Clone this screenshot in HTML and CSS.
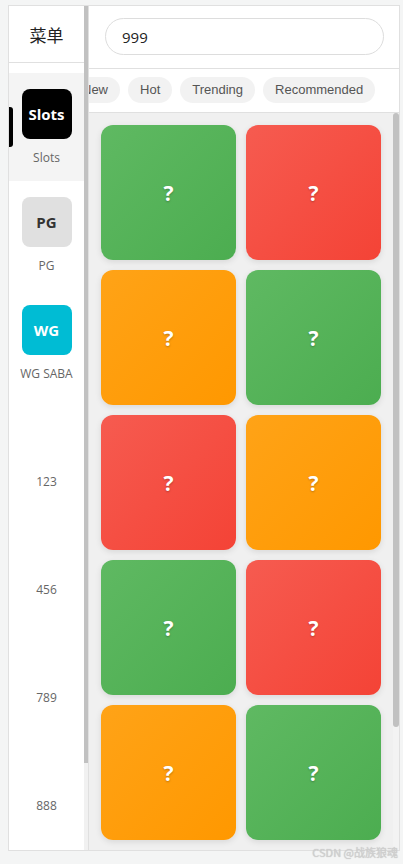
FILE: index.html
```html
<!DOCTYPE html>
<html>
<head>
  <meta charset="UTF-8">
  <title>菜单</title>
  <link rel="stylesheet" href="styles.css">
</head>
<body>
  <div class="app">
    <aside class="sidebar">
      <div class="side-scroll">
        <div class="side-head">菜单</div>
        <ul class="side-list">
          <li class="side-item active">
            <div class="side-icon icon-slots">Slots</div>
            <span class="side-label">Slots</span>
          </li>
          <li class="side-item">
            <div class="side-icon icon-pg">PG</div>
            <span class="side-label">PG</span>
          </li>
          <li class="side-item">
            <div class="side-icon icon-wg">WG</div>
            <span class="side-label">WG SABA</span>
          </li>
          <li class="side-item">
            <div class="side-icon"></div>
            <span class="side-label">123</span>
          </li>
          <li class="side-item">
            <div class="side-icon"></div>
            <span class="side-label">456</span>
          </li>
          <li class="side-item">
            <div class="side-icon"></div>
            <span class="side-label">789</span>
          </li>
          <li class="side-item">
            <div class="side-icon"></div>
            <span class="side-label">888</span>
          </li>
        </ul>
      </div>
      <div class="scroll-track side-track">
        <div class="scroll-thumb side-thumb"></div>
      </div>
    </aside>

    <main class="main">
      <div class="search-bar">
        <input type="text" class="search-input" value="999">
      </div>

      <div class="tabs">
        <div class="tab-row">
          <span class="tab">New</span>
          <span class="tab">Hot</span>
          <span class="tab">Trending</span>
          <span class="tab">Recommended</span>
        </div>
      </div>

      <div class="game-area">
        <div class="game-list">
          <div class="game-grid">
            <div class="game green">?</div>
            <div class="game red">?</div>
            <div class="game orange">?</div>
            <div class="game green">?</div>
            <div class="game red">?</div>
            <div class="game orange">?</div>
            <div class="game green">?</div>
            <div class="game red">?</div>
            <div class="game orange">?</div>
            <div class="game green">?</div>
          </div>
        </div>
        <div class="scroll-track list-track">
          <div class="scroll-thumb list-thumb"></div>
        </div>
      </div>
    </main>
  </div>

  <div class="watermark">CSDN @战族狼魂</div>
</body>
</html>
```

FILE: styles.css
```css
body {
  margin: 0;
  padding: 5px 0 0 8px;
  background: #f4f5f5;
  font-family: "Open Sans", "Noto Sans CJK SC", sans-serif;
  color: #333;
}

.app {
  width: 392px;
  height: 846px;
  box-sizing: border-box;
  border: 1px solid #e0e0e0;
  background: #fff;
  display: flex;
}

.scroll-track {
  flex-shrink: 0;
  background: #f1f1f1;
}

.scroll-thumb {
  background: #c1c1c1;
}

/* left menu */
.sidebar {
  width: 80px;
  flex-shrink: 0;
  box-sizing: border-box;
  border-right: 1px solid #e0e0e0;
  display: flex;
}

.side-scroll {
  flex: 1;
  min-width: 0;
  overflow: hidden;
}

.side-track {
  width: 4px;
}

.side-thumb {
  height: 757px;
}

.side-head {
  height: 56px;
  border-bottom: 1px solid #e0e0e0;
  display: flex;
  align-items: center;
  justify-content: center;
  font-family: "Noto Sans CJK SC", sans-serif;
  font-size: 17px;
  color: #222;
}

.side-list {
  list-style: none;
  margin: 0;
  padding: 10px 0 0;
}

.side-item {
  position: relative;
  height: 108px;
  box-sizing: border-box;
  padding-top: 16px;
  display: flex;
  flex-direction: column;
  align-items: center;
}

.side-item.active {
  background: #f4f4f4;
}

.side-item.active::before {
  content: "";
  position: absolute;
  left: 0;
  top: 34px;
  width: 4px;
  height: 40px;
  background: #000;
  border-radius: 0 3px 3px 0;
}

.side-icon {
  width: 50px;
  height: 50px;
  border-radius: 8px;
  display: flex;
  align-items: center;
  justify-content: center;
  font-weight: 700;
  font-size: 15px;
}

.icon-slots {
  background: #000;
  color: #fff;
}

.icon-pg {
  background: #e0e0e0;
  color: #333;
}

.icon-wg {
  background: #00bcd4;
  color: #fff;
}

.side-label {
  margin-top: 10px;
  font-size: 12px;
  line-height: 17px;
  color: #666;
}

/* right side */
.main {
  flex: 1;
  min-width: 0;
  display: flex;
  flex-direction: column;
}

.search-bar {
  height: 63px;
  box-sizing: border-box;
  padding: 12px 15px 0 16px;
  border-bottom: 1px solid #e0e0e0;
}

.search-input {
  width: 100%;
  height: 37px;
  box-sizing: border-box;
  border: 1px solid #ddd;
  border-radius: 19px;
  padding: 0 16px;
  font-family: "Open Sans", sans-serif;
  font-size: 15px;
  color: #222;
  outline: none;
}

.tabs {
  height: 44px;
  box-sizing: border-box;
  border-bottom: 1px solid #e0e0e0;
  overflow: hidden;
}

.tab-row {
  display: flex;
  gap: 8px;
  padding: 8px 12px 0;
  margin-left: -31px;
  white-space: nowrap;
}

.tab {
  flex-shrink: 0;
  height: 26px;
  line-height: 26px;
  padding: 0 12px;
  border-radius: 13px;
  background: #f2f2f2;
  font-family: "Liberation Sans", sans-serif;
  font-size: 13px;
  color: #555;
}

.game-area {
  flex: 1;
  min-height: 0;
  display: flex;
  background: #f0f0f0;
}

.game-list {
  flex: 1;
  min-width: 0;
  overflow: hidden;
}

.list-track {
  width: 6px;
  background: #f3f3f3;
}

.list-thumb {
  height: 614px;
  border-radius: 3px;
}

.game-grid {
  display: grid;
  grid-template-columns: repeat(2, 1fr);
  gap: 10px;
  padding: 12px 12px;
}

.game {
  height: 135px;
  border-radius: 12px;
  display: flex;
  align-items: center;
  justify-content: center;
  color: #fff;
  font-weight: 700;
  font-size: 21px;
  text-shadow: 0 1px 2px rgba(0,0,0,0.25);
  box-shadow: 0 2px 6px rgba(0,0,0,0.1);
}

.game.green { background: linear-gradient(135deg, #5fb962, #4cad50); }
.game.red { background: linear-gradient(135deg, #f65b50, #f44336); }
.game.orange { background: linear-gradient(135deg, #ffa317, #ff9800); }

.watermark {
  position: absolute;
  right: 5px;
  top: 846px;
  font-family: "Noto Sans CJK SC", sans-serif;
  font-size: 11px;
  line-height: 12px;
  color: #d0d0d0;
  text-shadow: 0 0 1px #bbb;
}
```
